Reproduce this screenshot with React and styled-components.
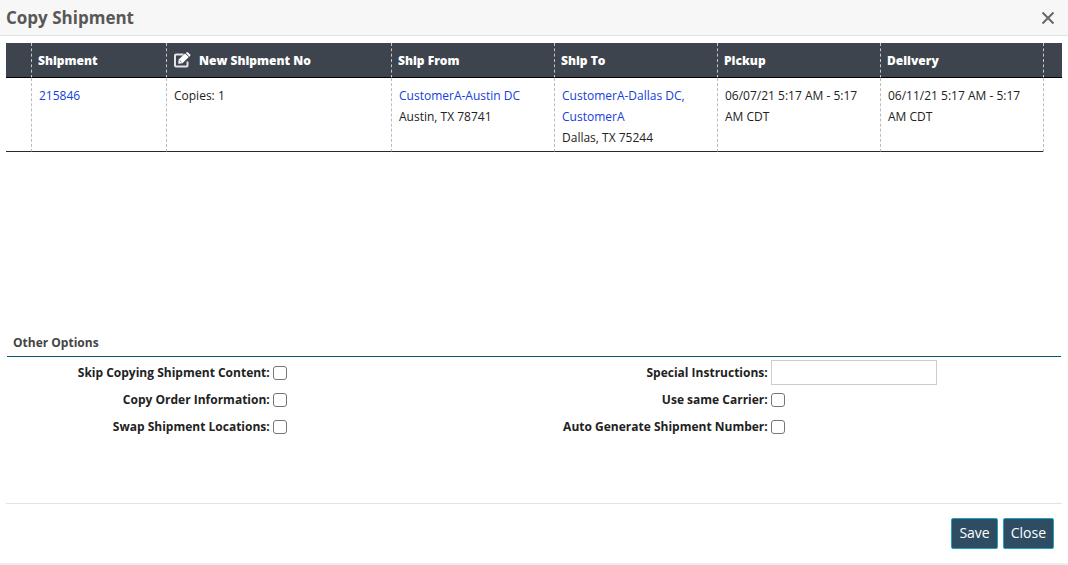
import React from "react";
import styled, { createGlobalStyle } from "styled-components";

const GlobalStyle = createGlobalStyle`
  * { box-sizing: border-box; }
  body {
    margin: 0;
    background: #fff;
    color: #222;
    font: 12px/21px "Open Sans", sans-serif;
  }
`;

const Dialog = styled.div`
  display: flex;
  flex-direction: column;
  min-height: 100vh;
  border-bottom: 2px solid #ededed;
`;

const TitleBar = styled.header`
  display: flex;
  align-items: center;
  justify-content: space-between;
  height: 36px;
  padding: 0 13px 0 6px;
  background: #f7f7f7;
  border-bottom: 1px solid #e3e3e3;
`;

const Title = styled.h1`
  margin: 0;
  color: #585858;
  font-size: 17px;
  line-height: 24px;
  font-weight: 700;
`;

const CloseIcon = styled.button`
  display: flex;
  padding: 0;
  border: 0;
  background: none;
  color: #666;
  cursor: pointer;
`;

const Content = styled.main`
  flex: 1;
  padding: 7px 6px 0;
`;

const GridArea = styled.section`
  min-height: 289px;
`;

const Grid = styled.table`
  width: 100%;
  table-layout: fixed;
  border-collapse: separate;
  border-spacing: 0;
`;

const Col = styled.col`
  width: ${(p) => p.$width};
`;

const HeadCell = styled.th`
  height: 35px;
  padding: 0 6px;
  background: #3d444d;
  border-bottom: 1px solid #000;
  border-left: ${(p) => (p.$first ? "0" : "1px dashed #c4c6c9")};
  color: #fff;
  font-weight: 800;
  text-align: left;
  white-space: nowrap;
`;

const HeadLabel = styled.span`
  display: flex;
  align-items: center;
  gap: 8px;
  padding-left: 1px;
`;

const Cell = styled.td`
  padding: 7px 8px 3px 7px;
  border-bottom: 1px solid #2b2b2b;
  border-left: ${(p) => (p.$first ? "0" : "1px dashed #bbb")};
  vertical-align: top;
`;

const EndCell = styled.td`
  padding: 0;
  border-left: 1px dashed #bbb;
`;

const Link = styled.a`
  color: #1440dc;
  text-decoration: none;
`;

const SectionTitle = styled.h2`
  margin: 0 1px;
  padding: 0 6px 3px;
  border-bottom: 1px solid #07566b;
  color: #444;
  font-size: 12px;
  line-height: 21px;
  font-weight: 700;
`;

const Options = styled.div`
  display: grid;
  grid-template-columns: 1fr 1fr;
  column-gap: 4px;
  padding: 2px 0 0 1px;
`;

const OptionRow = styled.div`
  display: grid;
  grid-template-columns: ${(p) => p.$labelWidth} 1fr;
  align-items: center;
  column-gap: 3px;
  height: 27px;
`;

const Label = styled.label`
  font-weight: 700;
  text-align: right;
  white-space: nowrap;
`;

const Checkbox = styled.input`
  appearance: none;
  width: 14px;
  height: 14px;
  margin: 0;
  border: 1px solid #767676;
  border-radius: 3px;
  background: #fff;
  &:checked { background: #2e4d63; }
`;

const TextInput = styled.input`
  width: 166px;
  height: 25px;
  padding: 0 6px;
  border: 1px solid #ccc;
  font: inherit;
`;

const Footer = styled.footer`
  display: flex;
  justify-content: flex-end;
  gap: 5px;
  margin: 0 6px;
  padding: 14px 8px;
  border-top: 1px solid #e3e3e3;
`;

const Button = styled.button`
  height: 31px;
  padding: 0 7px 2px;
  border: 1px solid #1fa3c4;
  border-radius: 2px;
  background: #2e4d63;
  color: #fff;
  font: 14px/20px "Open Sans", sans-serif;
  cursor: pointer;
`;

const EditIcon = () => (
  <svg width="17" height="16" viewBox="0 0 17 16" aria-hidden="true">
    <path d="M9.5 2.5H2q-1 0-1 1v10q0 1 1 1h10.500q1 0 1-1V9.500" fill="none" stroke="#e4e4e4" strokeWidth="2" />
    <path d="M4.200 11.800l.5-4.300 6.300-6 3.800 3.600-6.300 6.200z" fill="#fff" />
    <path d="M11.900 1l.6-.6a1 1 0 0 1 1.400 0l2.200 2.200a1 1 0 0 1 0 1.400l-.7.700z" fill="#fff" />
    <path d="M5.700 8.500l1.900 1.900" stroke="#3d444d" strokeWidth=".7" />
  </svg>
);

const Check = ({ id, label, labelWidth }) => (
  <OptionRow $labelWidth={labelWidth}>
    <Label htmlFor={id}>{label}</Label>
    <Checkbox id={id} type="checkbox" />
  </OptionRow>
);

export default function App() {
  return (
    <>
      <GlobalStyle />
      <Dialog>
        <TitleBar>
          <Title>Copy Shipment</Title>
          <CloseIcon type="button" aria-label="Close dialog">
            <svg width="14" height="14" viewBox="0 0 14 14">
              <path d="M1.5 1.5l11 11M12.5 1.5l-11 11" fill="none" stroke="currentColor" strokeWidth="1.9" />
            </svg>
          </CloseIcon>
        </TitleBar>
        <Content>
          <GridArea>
            <Grid>
              <colgroup>
                <Col $width="25px" />
                <Col $width="135px" />
                <Col $width="225px" />
                <Col $width="163px" />
                <Col $width="163px" />
                <Col $width="163px" />
                <Col $width="163px" />
                <Col $width="auto" />
              </colgroup>
              <thead>
                <tr>
                  <HeadCell $first />
                  <HeadCell>Shipment</HeadCell>
                  <HeadCell>
                    <HeadLabel><EditIcon />New Shipment No</HeadLabel>
                  </HeadCell>
                  <HeadCell>Ship From</HeadCell>
                  <HeadCell>Ship To</HeadCell>
                  <HeadCell>Pickup</HeadCell>
                  <HeadCell>Delivery</HeadCell>
                  <HeadCell />
                </tr>
              </thead>
              <tbody>
                <tr>
                  <Cell $first />
                  <Cell><Link href="#215846">215846</Link></Cell>
                  <Cell>Copies: 1</Cell>
                  <Cell><Link href="#austin">CustomerA-Austin DC</Link><br />Austin, TX 78741</Cell>
                  <Cell><Link href="#dallas">CustomerA-Dallas DC, CustomerA</Link><br />Dallas, TX 75244</Cell>
                  <Cell>06/07/21 5:17 AM - 5:17 AM CDT</Cell>
                  <Cell>06/11/21 5:17 AM - 5:17 AM CDT</Cell>
                  <EndCell />
                </tr>
              </tbody>
            </Grid>
          </GridArea>
          <SectionTitle>Other Options</SectionTitle>
          <Options>
            <div>
              <Check id="skip" label="Skip Copying Shipment Content:" labelWidth="50%" />
              <Check id="order" label="Copy Order Information:" labelWidth="50%" />
              <Check id="swap" label="Swap Shipment Locations:" labelWidth="50%" />
            </div>
            <div>
              <OptionRow $labelWidth="44%">
                <Label htmlFor="special">Special Instructions:</Label>
                <TextInput id="special" type="text" />
              </OptionRow>
              <Check id="carrier" label="Use same Carrier:" labelWidth="44%" />
              <Check id="auto" label="Auto Generate Shipment Number:" labelWidth="44%" />
            </div>
          </Options>
        </Content>
        <Footer>
          <Button type="button">Save</Button>
          <Button type="button">Close</Button>
        </Footer>
      </Dialog>
    </>
  );
}
